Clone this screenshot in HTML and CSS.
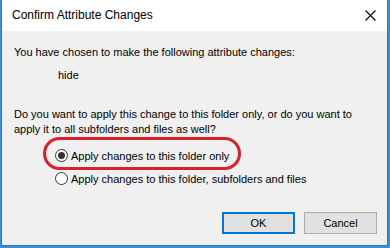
FILE: index.html
```html
<!DOCTYPE html>
<html>
<head>
<meta charset="utf-8">
<link rel="stylesheet" href="styles.css">
</head>
<body>
<div class="window">
  <div class="titlebar">
    <span class="title">Confirm Attribute Changes</span>
    <svg class="close" width="11" height="11" viewBox="0 0 11 11"><path d="M0.5 0.5 L10.5 10.5 M10.5 0.5 L0.5 10.5" stroke="#000" stroke-width="1.1" fill="none"/></svg>
  </div>
  <div class="content">
    <p class="line first">You have chosen to make the following attribute changes:</p>
    <p class="line attr">hide</p>
    <p class="line question">Do you want to apply this change to this folder only, or do you want to<br>apply it to all subfolders and files as well?</p>
    <div class="options">
      <label class="option"><span class="radio checked"></span>Apply changes to this folder only</label>
      <label class="option"><span class="radio"></span>Apply changes to this folder, subfolders and files</label>
      <div class="highlight"></div>
    </div>
    <div class="buttons">
      <button class="btn default">OK</button>
      <button class="btn">Cancel</button>
    </div>
  </div>
</div>
</body>
</html>
```
FILE: styles.css
```css
html, body {
  margin: 0;
  padding: 0;
  background: #3b8fd6;
  width: 390px;
  height: 248px;
  overflow: hidden;
}
.window {
  margin-left: 1px;
  width: 385px;
  height: 245px;
  border: 1px solid #1a7fd4;
  border-top: none;
  background: #f0f0f0;
  font-family: "Liberation Sans", Arial, sans-serif;
  font-size: 11px;
  color: #000;
  display: flex;
  flex-direction: column;
}
.titlebar {
  height: 31px;
  background: #fff;
  display: flex;
  align-items: center;
  justify-content: space-between;
  padding: 0 11px 0 10px;
}
.title {
  font-size: 12px;
  margin-top: -1px;
}
.close {
  margin-top: -1px;
}
.content {
  flex: 1;
  display: flex;
  flex-direction: column;
  padding: 0 0 0 12px;
}
.line {
  margin: 0;
  line-height: 15px;
}
.first { margin-top: 14px; }
.attr { margin-top: 8px; padding-left: 44px; }
.question { margin-top: 24px; }
.options {
  position: relative;
  margin-top: 11px;
  padding-left: 41px;
  display: flex;
  flex-direction: column;
  gap: 8px;
}
.option {
  display: flex;
  align-items: center;
  height: 15px;
}
.radio {
  width: 13px;
  height: 13px;
  box-sizing: border-box;
  border: 1px solid #333;
  border-radius: 50%;
  background: #fff;
  margin-right: 3px;
  position: relative;
}
.radio.checked::after {
  content: "";
  position: absolute;
  left: 2px;
  top: 2px;
  width: 7px;
  height: 7px;
  border-radius: 50%;
  background: #333;
}
.highlight {
  position: absolute;
  left: 29px;
  top: -11px;
  width: 198px;
  height: 33px;
  box-sizing: border-box;
  border: 3px solid #d8212b;
  border-radius: 17px;
}
.buttons {
  margin-top: auto;
  margin-bottom: 11px;
  display: flex;
  justify-content: flex-end;
  gap: 9px;
  padding-right: 10px;
}
.btn {
  width: 73px;
  height: 22px;
  box-sizing: border-box;
  border: 1px solid #adadad;
  background: #e1e1e1;
  font-family: "Liberation Sans", Arial, sans-serif;
  font-size: 11px;
  color: #000;
  padding: 0;
}
.btn.default {
  border: 2px solid #0078d7;
}
```
